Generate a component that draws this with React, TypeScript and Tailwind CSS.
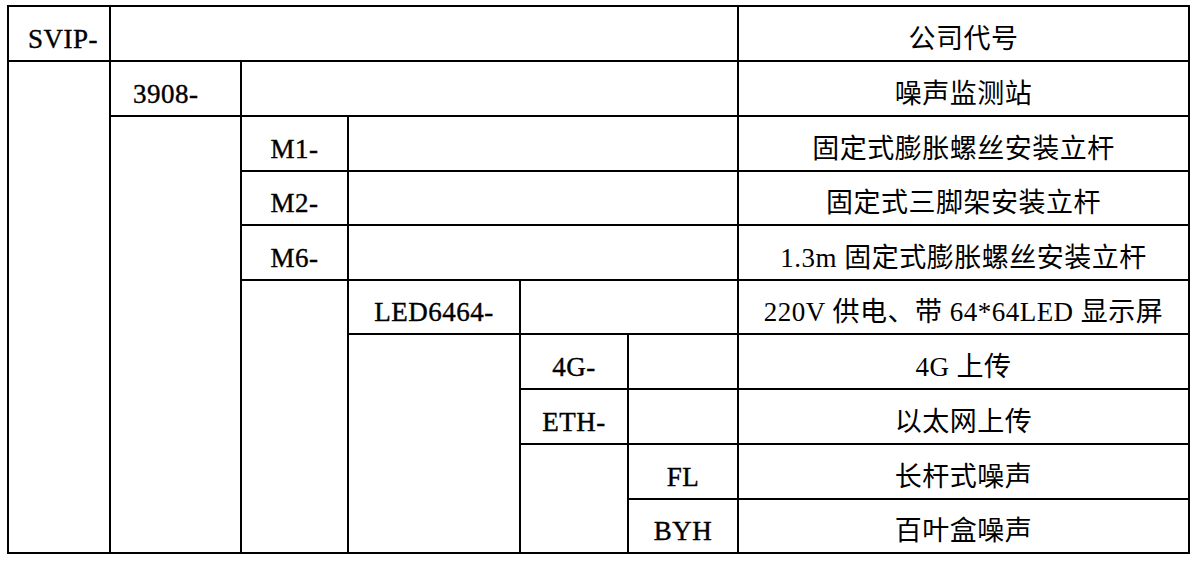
import React from "react";

type Cell = {
  area: string;
  text?: string;
  pad?: string;
  code?: boolean;
};

// staircase code table: each level steps one column to the right
const cells: Cell[] = [
  { area: "[grid-area:1/1/2/2]", text: "SVIP-", pad: "justify-start pl-[19px]", code: true },
  { area: "[grid-area:1/2/2/7]" },
  { area: "[grid-area:1/7/2/8]", text: "公司代号" },

  { area: "[grid-area:2/1/11/2]" },
  { area: "[grid-area:2/2/3/3]", text: "3908-", pad: "justify-start pl-[22px]", code: true },
  { area: "[grid-area:2/3/3/7]" },
  { area: "[grid-area:2/7/3/8]", text: "噪声监测站" },

  { area: "[grid-area:3/2/11/3]" },
  { area: "[grid-area:3/3/4/4]", text: "M1-", code: true },
  { area: "[grid-area:3/4/4/7]" },
  { area: "[grid-area:3/7/4/8]", text: "固定式膨胀螺丝安装立杆" },

  { area: "[grid-area:4/3/5/4]", text: "M2-", code: true },
  { area: "[grid-area:4/4/5/7]" },
  { area: "[grid-area:4/7/5/8]", text: "固定式三脚架安装立杆" },

  { area: "[grid-area:5/3/6/4]", text: "M6-", code: true },
  { area: "[grid-area:5/4/6/7]" },
  { area: "[grid-area:5/7/6/8]", text: "1.3m 固定式膨胀螺丝安装立杆" },

  { area: "[grid-area:6/3/11/4]" },
  { area: "[grid-area:6/4/7/5]", text: "LED6464-", code: true },
  { area: "[grid-area:6/5/7/7]" },
  { area: "[grid-area:6/7/7/8]", text: "220V 供电、带 64*64LED 显示屏" },

  { area: "[grid-area:7/4/11/5]" },
  { area: "[grid-area:7/5/8/6]", text: "4G-", code: true },
  { area: "[grid-area:7/6/8/7]" },
  { area: "[grid-area:7/7/8/8]", text: "4G 上传" },

  { area: "[grid-area:8/5/9/6]", text: "ETH-", code: true },
  { area: "[grid-area:8/6/9/7]" },
  { area: "[grid-area:8/7/9/8]", text: "以太网上传" },

  { area: "[grid-area:9/5/11/6]" },
  { area: "[grid-area:9/6/10/7]", text: "FL", code: true },
  { area: "[grid-area:9/7/10/8]", text: "长杆式噪声" },

  { area: "[grid-area:10/6/11/7]", text: "BYH", code: true },
  { area: "[grid-area:10/7/11/8]", text: "百叶盒噪声" },
];

export default function App() {
  return (
    <div className="w-[1200px] h-[565px] bg-white overflow-hidden pt-[5px] pl-[7px]">
      <div
        className="grid w-fit bg-black p-[2px] gap-[2px] grid-cols-[100px_129px_105px_170px_106px_108px_449px] grid-rows-[53px_53px_53px_52px_53px_52px_53px_53px_53px_52px] text-black text-[27px] leading-none tracking-[0.5px]"
        style={{ fontFamily: '"Liberation Serif", "Noto Sans CJK SC", serif' }}
      >
        {cells.map((c, i) => (
          <div
            key={i}
            className={`${c.area} bg-white flex items-center pt-[11px] whitespace-nowrap ${c.pad ?? "justify-center"} ${c.code ? "[-webkit-text-stroke:0.4px_black]" : ""}`}
          >
            {c.text}
          </div>
        ))}
      </div>
    </div>
  );
}
